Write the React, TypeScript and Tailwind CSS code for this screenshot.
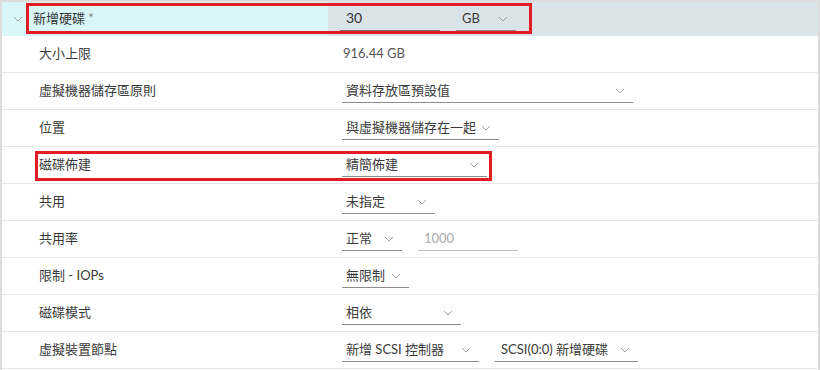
import type { ReactNode } from 'react'

const font = { fontFamily: 'Lato, "Noto Sans CJK TC", sans-serif' }

function Chevron({ className = '' }: { className?: string }) {
  return (
    <svg width="10" height="6" viewBox="0 0 10 6" className={className} fill="none">
      <polyline points="1,1 5,5 9,1" stroke="#a3a3a3" strokeWidth="1" />
    </svg>
  )
}

function Select({ value, width, className = '' }: { value: string; width: string; className?: string }) {
  return (
    <div className={`flex items-center justify-between h-[24px] border-b border-[#8c8c8c] pl-[4px] pr-[8px] ${width} ${className}`}>
      <span className="text-[13px] text-[#3a3a3a] whitespace-nowrap">{value}</span>
      <Chevron />
    </div>
  )
}

function Row({ label, children }: { label: string; children: ReactNode }) {
  return (
    <div className="flex items-center h-[37px] border-b border-[#e6e6e6]">
      <div className="w-[340px] pl-[37px] text-[13px] text-[#3a3a3a]">{label}</div>
      <div className="flex items-center gap-[16px]">{children}</div>
    </div>
  )
}

export default function App() {
  return (
    <div className="w-[820px] h-[370px] bg-white overflow-hidden" style={font}>
      <div className="relative h-full border-t-2 border-l-2 border-r-2 border-[#dcdcdc]">
        {/* header row */}
        <div className="flex h-[34px]">
          <div className="w-[326px] flex items-center bg-[#d9f7f8] pl-[11px]">
            <Chevron className="mr-[10px]" />
            <span className="text-[13px] text-[#333]">新增硬碟 <span className="text-[#888]">*</span></span>
          </div>
          <div className="flex-1 flex items-center bg-[#dae3e8] pl-[12px] gap-[16px]">
            <div className="w-[100px] h-[24px] border-b border-[#6f6f6f] pl-[6px] text-[14px] text-[#333] leading-[22px]">30</div>
            <Select value="GB" width="w-[60px]" className="pl-[6px]" />
          </div>
        </div>

        <Row label="大小上限">
          <span className="text-[13px] text-[#565656] pl-[1px]">916.44 GB</span>
        </Row>
        <Row label="虛擬機器儲存區原則">
          <Select value="資料存放區預設值" width="w-[291px]" />
        </Row>
        <Row label="位置">
          <Select value="與虛擬機器儲存在一起" width="w-[157px]" />
        </Row>
        <Row label="磁碟佈建">
          <Select value="精簡佈建" width="w-[145px]" />
        </Row>
        <Row label="共用">
          <Select value="未指定" width="w-[93px]" />
        </Row>
        <Row label="共用率">
          <Select value="正常" width="w-[60px]" />
          <div className="w-[100px] h-[24px] border-b border-[#bdbdbd] pl-[6px] text-[13px] text-[#aaa] leading-[22px]">1000</div>
        </Row>
        <Row label="限制 - IOPs">
          <Select value="無限制" width="w-[67px]" />
        </Row>
        <Row label="磁碟模式">
          <Select value="相依" width="w-[119px]" />
        </Row>
        <Row label="虛擬裝置節點">
          <Select value="新增 SCSI 控制器" width="w-[137px]" />
          <Select value="SCSI(0:0) 新增硬碟" width="w-[143px]" className="pl-[6px]" />
        </Row>

        {/* annotation boxes */}
        <div className="absolute left-[24px] top-[1px] w-[506px] h-[31px] border-[3px] border-[#e31b23]" />
        <div className="absolute left-[33px] top-[149px] w-[457px] h-[30px] border-[3px] border-[#e31b23]" />
      </div>
    </div>
  )
}
